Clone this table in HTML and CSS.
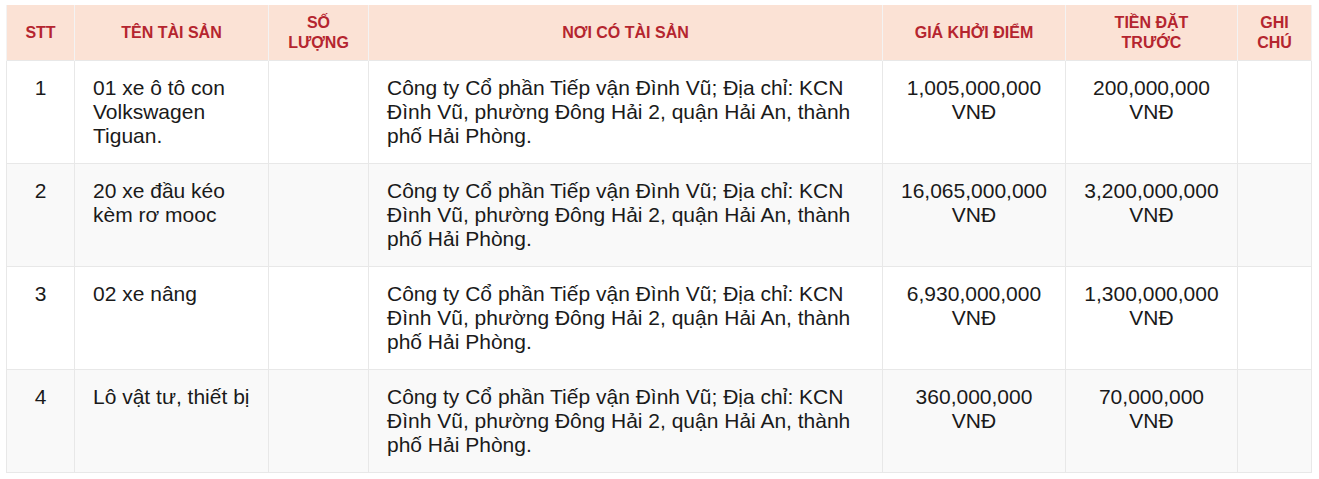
FILE: index.html
```html
<!DOCTYPE html>
<html lang="vi">
<head>
<meta charset="utf-8">
<link rel="stylesheet" href="styles.css">
</head>
<body>
<table class="assets">
  <colgroup>
    <col class="c-stt"><col class="c-name"><col class="c-qty"><col class="c-loc"><col class="c-price"><col class="c-deposit"><col class="c-note">
  </colgroup>
  <thead>
    <tr>
      <th>STT</th>
      <th>TÊN TÀI SẢN</th>
      <th>SỐ<br>LƯỢNG</th>
      <th>NƠI CÓ TÀI SẢN</th>
      <th>GIÁ KHỞI ĐIỂM</th>
      <th>TIỀN ĐẶT<br>TRƯỚC</th>
      <th>GHI<br>CHÚ</th>
    </tr>
  </thead>
  <tbody>
    <tr>
      <td class="center">1</td>
      <td>01 xe ô tô con Volkswagen Tiguan.</td>
      <td></td>
      <td>Công ty Cổ phần Tiếp vận Đình Vũ; Địa chỉ: KCN Đình Vũ, phường Đông Hải 2, quận Hải An, thành phố Hải Phòng.</td>
      <td class="center">1,005,000,000 VNĐ</td>
      <td class="center">200,000,000 VNĐ</td>
      <td></td>
    </tr>
    <tr>
      <td class="center">2</td>
      <td>20 xe đầu kéo kèm rơ mooc</td>
      <td></td>
      <td>Công ty Cổ phần Tiếp vận Đình Vũ; Địa chỉ: KCN Đình Vũ, phường Đông Hải 2, quận Hải An, thành phố Hải Phòng.</td>
      <td class="center">16,065,000,000 VNĐ</td>
      <td class="center">3,200,000,000 VNĐ</td>
      <td></td>
    </tr>
    <tr>
      <td class="center">3</td>
      <td>02 xe nâng</td>
      <td></td>
      <td>Công ty Cổ phần Tiếp vận Đình Vũ; Địa chỉ: KCN Đình Vũ, phường Đông Hải 2, quận Hải An, thành phố Hải Phòng.</td>
      <td class="center">6,930,000,000 VNĐ</td>
      <td class="center">1,300,000,000 VNĐ</td>
      <td></td>
    </tr>
    <tr>
      <td class="center">4</td>
      <td>Lô vật tư, thiết bị</td>
      <td></td>
      <td>Công ty Cổ phần Tiếp vận Đình Vũ; Địa chỉ: KCN Đình Vũ, phường Đông Hải 2, quận Hải An, thành phố Hải Phòng.</td>
      <td class="center">360,000,000 VNĐ</td>
      <td class="center">70,000,000 VNĐ</td>
      <td></td>
    </tr>
  </tbody>
</table>
</body>
</html>
```
FILE: styles.css
```css
html, body {
  margin: 0;
  padding: 0;
  background: #ffffff;
}
body {
  padding: 5px 0 0 6px;
  font-family: "Liberation Sans", Arial, sans-serif;
}
.assets {
  border-collapse: collapse;
  table-layout: fixed;
  width: 1305px;
}
.c-stt { width: 68px; }
.c-name { width: 194px; }
.c-qty { width: 100px; }
.c-loc { width: 514px; }
.c-price { width: 183px; }
.c-deposit { width: 172px; }
.c-note { width: 74px; }
.assets th {
  background: #fbe2d5;
  color: #b5252f;
  font-weight: bold;
  font-size: 16px;
  line-height: 20px;
  height: 55px;
  padding: 0 6px;
  text-align: center;
  vertical-align: middle;
  border-left: 1px solid #f3f3f3;
  border-right: 1px solid #f3f3f3;
}
.assets td {
  font-size: 21px;
  line-height: 24px;
  color: #1a1a1a;
  padding: 15px 12px 15px 18px;
  vertical-align: top;
  border: 1px solid #e8e8e8;
  height: 72px;
}
.assets tbody tr:nth-child(even) td {
  background: #f9f9f9;
}
.assets td.center {
  text-align: center;
  padding-left: 14px;
  padding-right: 14px;
}
```
